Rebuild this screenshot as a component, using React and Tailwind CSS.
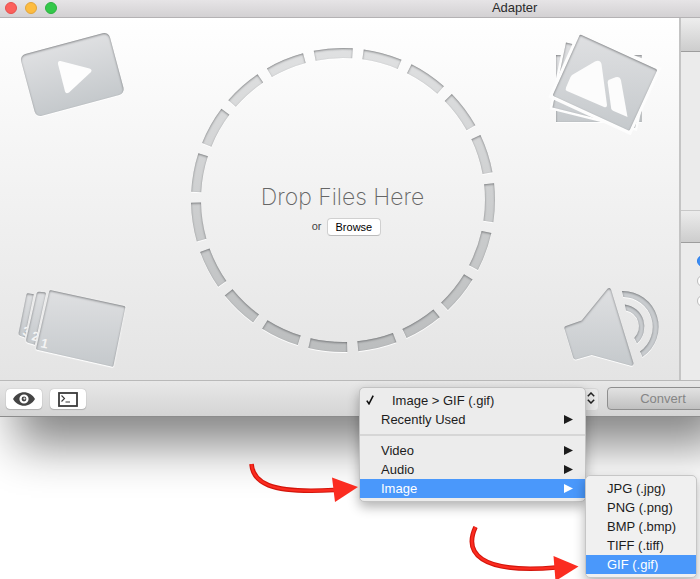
const GIF = 'Image > GIF (.gif)';

const formats = ['JPG (.jpg)', 'PNG (.png)', 'BMP (.bmp)', 'TIFF (.tiff)', 'GIF (.gif)'];

const SEGMENTS = 19;

// One inset block of the drop ring, centred on the given angle (degrees from the top)
const segmentPath = (deg) => {
  const point = (r, a) => {
    const rad = (a * Math.PI) / 180;
    return `${(155 + r * Math.sin(rad)).toFixed(2)} ${(155 - r * Math.cos(rad)).toFixed(2)}`;
  };
  const from = deg - 7.4;
  const to = deg + 7.4;
  return `M${point(152, from)} A152 152 0 0 1 ${point(152, to)} L${point(142, to)} A142 142 0 0 0 ${point(142, from)}Z`;
};

const SharedDefs = () => (
  <svg width="0" height="0" className="absolute" aria-hidden="true">
    <defs>
      <linearGradient id="metal" x1="0" y1="0" x2="0" y2="1">
        <stop offset="0" stopColor="#dfe0e2" />
        <stop offset="1" stopColor="#c5c9cc" />
      </linearGradient>
      <linearGradient id="ring" gradientUnits="userSpaceOnUse" x1="0" y1="0" x2="0" y2="310">
        <stop offset="0" stopColor="#e0e1e2" />
        <stop offset="1" stopColor="#bbbdbe" />
      </linearGradient>
      <filter id="inset" x="-10%" y="-10%" width="120%" height="120%">
        <feOffset in="SourceAlpha" dx="0" dy="1" result="shift" />
        <feGaussianBlur in="shift" stdDeviation="0.8" result="soft" />
        <feComposite in="SourceAlpha" in2="soft" operator="out" result="edge" />
        <feFlood floodColor="#55585c" floodOpacity="0.9" />
        <feComposite in2="edge" operator="in" result="shade" />
        <feOffset in="SourceAlpha" dy="1" result="below" />
        <feFlood floodColor="#ffffff" floodOpacity="0.9" />
        <feComposite in2="below" operator="in" result="light" />
        <feMerge>
          <feMergeNode in="light" />
          <feMergeNode in="SourceGraphic" />
          <feMergeNode in="shade" />
        </feMerge>
      </filter>
    </defs>
  </svg>
);

const VideoIcon = () => (
  <svg width="122" height="98" viewBox="16 26 122 98" aria-hidden="true">
    <g filter="url(#inset)">
      <rect x="26.3" y="42.5" width="92" height="64" rx="6" fill="url(#metal)" transform="rotate(-15 72.3 74.5)" />
    </g>
    <path d="M60.5 61 L89.5 68.5 Q93 70 90.5 72.5 L69 92.5 Q66 94.5 65 91.5 L58 64 Q57.7 60.5 60.5 61Z" fill="#fdfdfd" />
  </svg>
);

const PhotosIcon = () => (
  <svg width="116" height="112" viewBox="547 26 116 112" aria-hidden="true">
    <path d="M556 55 H641.7 V122 H556Z" fill="url(#metal)" filter="url(#inset)" />
    <path d="M566 42.5 L649 62.5 L635 128 L552.5 107.5Z" fill="#fdfdfd" stroke="#fdfdfd" strokeWidth="5" />
    <path d="M566 42.5 L649 62.5 L635 128 L552.5 107.5Z" fill="url(#metal)" filter="url(#inset)" />
    <path d="M580.5 34.5 L657 69.5 L629 130.5 L553 95.5Z" fill="#fdfdfd" stroke="#fdfdfd" strokeWidth="7" />
    <path d="M581.5 35 L656 69 Q657.3 69.8 656.8 71 L630 129.5 Q629.4 130.8 628 130.3 L554 96.3 Q552.7 95.5 553.2 94.2 L579.5 35.6 Q580.2 34.5 581.5 35Z" fill="url(#metal)" filter="url(#inset)" />
    <path d="M572 75 L595 61.5 Q600 59.3 601.5 64 L607 105 Q607 108 604 107 L567 91 Q565 89.8 566 87.5 L570.5 77Z" fill="#fcfcfc" />
    <path d="M608.5 80 L615.5 77.3 Q620 76.3 621 80.5 L627.5 117 L613 110.8 Q611.5 110 611.2 108.5 L607.6 82Z" fill="#fcfcfc" />
  </svg>
);

const SLIDE_2 = 'M39 290.7 L44.5 291.3 Q46.2 291.8 45.8 293.4 L34.9 343.8 L28 341.8 Q25.8 341 26.2 338.5 L36.6 292.5 Q37.3 290.5 39 290.7Z';
const SLIDE_1 = 'M51 289.2 L124 305 Q125.5 305.5 125.2 307 L113.5 364.5 Q113 366 111.5 365.6 L37.2 348.8 Q35.9 348.3 36.2 347 L49.2 290.4 Q49.6 288.9 51 289.2Z';

const SlidesIcon = () => (
  <svg width="122" height="90" viewBox="16 281 122 90" className="font-['Liberation_Sans'] text-[13px] font-bold" aria-hidden="true">
    <path d="M28 292.3 L33.8 293.3 L24.8 336.5 L20 334.8 Q18.2 334 18.6 332 L26.3 294 Q26.8 292 28 292.3Z" fill="url(#metal)" filter="url(#inset)" />
    <text fill="#f4f4f4" transform="translate(22 334) rotate(13)">3</text>
    <path d={SLIDE_2} fill="#ececec" stroke="#ececec" strokeWidth="3" />
    <path d={SLIDE_2} fill="url(#metal)" filter="url(#inset)" />
    <text fill="#f4f4f4" transform="translate(31 339) rotate(13)">2</text>
    <path d={SLIDE_1} fill="#ececec" stroke="#ececec" strokeWidth="3" />
    <path d={SLIDE_1} fill="url(#metal)" filter="url(#inset)" />
    <text fill="#f4f4f4" transform="translate(40 346) rotate(13)">1</text>
  </svg>
);

const SpeakerIcon = () => (
  <svg width="116" height="90" viewBox="547 281 116 90" aria-hidden="true">
    <path d="M607.5 287.8 Q610 285.8 611 288.6 L633.4 361.8 Q634 365.3 631 364.8 L591.7 354 L576 358.4 Q573.9 358.8 573.2 356.8 L564.4 327.8 Q564 325.6 566 325 L581.7 319.5Z" fill="url(#metal)" filter="url(#inset)" />
    <g fill="#c9cccf" filter="url(#inset)">
      <path d="M622 290 A36 36 0 0 1 642.5 356 L640 350.5 A30 30 0 0 0 623.3 296Z" />
      <path d="M624.8 303.5 A22.5 22.5 0 0 1 637 342.5 L634.3 337 A16.5 16.5 0 0 0 626 309.5Z" />
    </g>
  </svg>
);

const DropRing = () => (
  <svg width="310" height="310" viewBox="0 0 310 310" className="col-start-1 row-start-1" aria-hidden="true">
    <g filter="url(#inset)" fill="url(#ring)">
      {Array.from({ length: SEGMENTS }, (_, i) => (
        <path key={i} d={segmentPath(-3.7 + (i * 360) / SEGMENTS)} />
      ))}
    </g>
  </svg>
);

const TitleBar = () => (
  <header className="grid h-[18px] grid-cols-[17fr_auto_7fr] items-center border-b border-[#b4b2b4] bg-gradient-to-b from-[#e6e4e6] to-[#d3d1d3]">
    <div className="flex gap-2 pb-1 pl-[5px]">
      <button type="button" aria-label="Close" className="size-3 rounded-full border border-[#e5504d] bg-[#fc605c]" />
      <button type="button" aria-label="Minimize" className="size-3 rounded-full border border-[#e2a53a] bg-[#fdbc40]" />
      <button type="button" aria-label="Zoom" className="size-3 rounded-full border border-[#2cb140] bg-[#34c84a]" />
    </div>
    <h1 className="pb-1 text-[13px] leading-4 text-[#2b2b2b]">Adapter</h1>
  </header>
);

const DropZone = () => (
  <main className="flex min-w-0 flex-1 items-stretch justify-between bg-gradient-to-b from-white to-[#e4e4e4] px-4 py-2">
    <div className="flex flex-col justify-between">
      <VideoIcon />
      <SlidesIcon />
    </div>
    <section className="grid place-items-center pt-0.5">
      <DropRing />
      <div className="col-start-1 row-start-1 flex flex-col items-center gap-[5px] pt-4">
        <h2 className="font-['Inter'] text-[23px] leading-8 font-extralight text-[#666]">Drop Files Here</h2>
        <div className="flex items-center gap-[5px] pl-2 text-[11px]">
          <span className="text-[#444]">or</span>
          <button type="button" className="h-[18px] rounded-[4px] border border-[#d0d0d0] border-b-[#bbb] bg-white px-2 leading-4 text-black">
            Browse
          </button>
        </div>
      </div>
    </section>
    <div className="flex flex-col justify-between">
      <PhotosIcon />
      <SpeakerIcon />
    </div>
  </main>
);

const SidebarHeader = () => (
  <div className="h-8 border-b border-[#9d9d9d] bg-gradient-to-b from-[#ececec] to-[#cdcdcd]" />
);

const Sidebar = () => (
  <aside className="w-[61px] shrink-0 border-l-2 border-[#c4c4c4] bg-[#ebebeb] pt-[2px]">
    <SidebarHeader />
    <div className="h-[159px] border-b border-[#c8c8c8]" />
    <SidebarHeader />
    <div className="flex flex-col gap-2 pt-3 pl-4">
      <input type="radio" name="quality" aria-label="High quality" defaultChecked className="size-3 appearance-none rounded-full border border-[#bbb] bg-white checked:border-[#2b7de9] checked:bg-[#3b8df5]" />
      <input type="radio" name="quality" aria-label="Medium quality" className="size-3 appearance-none rounded-full border border-[#bbb] bg-white" />
      <input type="radio" name="quality" aria-label="Low quality" className="size-3 appearance-none rounded-full border border-[#bbb] bg-white" />
    </div>
  </aside>
);

const MenuItem = ({ label, selected, indent, submenu }) => (
  <button
    type="button"
    role="menuitem"
    className={`flex h-[19px] w-full items-center pr-3 text-left ${indent ? 'pl-8' : 'pl-[21px]'} ${
      selected ? 'bg-[#4a98fb] text-white' : 'text-[#1c1c1c]'
    }`}
  >
    <span className="flex-1">{label}</span>
    {submenu && (
      <svg width="9" height="9" viewBox="0 0 9 9" fill="currentColor" aria-hidden="true">
        <path d="M0 0 L9 4.5 L0 9Z" />
      </svg>
    )}
  </button>
);

const FormatMenu = () => (
  <div role="menu" className="absolute top-0 left-0 z-10 w-[227px] rounded-[5px] border border-[#c2c2c2] bg-[#ececec] py-[3px] text-[13px] leading-[19px] shadow-[0_5px_12px_rgba(0,0,0,0.3)]">
    <div className="relative">
      <svg width="8" height="10" viewBox="0 0 8 10" className="absolute top-1 left-[6px]" fill="none" stroke="#111" strokeWidth="1.6" aria-hidden="true">
        <path d="M0.8 5.6 L3 8.8 L7.2 0.6" />
      </svg>
      <MenuItem label={GIF} indent />
    </div>
    <MenuItem label="Recently Used" submenu />
    <hr className="my-[5px] border-t-2 border-[#d6d6d6]" />
    <MenuItem label="Video" submenu />
    <MenuItem label="Audio" submenu />
    <div className="relative">
      <MenuItem label="Image" selected submenu />
      <div role="menu" className="absolute -top-1 left-full w-28 rounded-[5px] border border-[#c6c6c6] bg-[#f0f0f0] py-[3px] shadow-[0_5px_12px_rgba(0,0,0,0.3)]">
        {formats.map((format) => (
          <MenuItem key={format} label={format} selected={format === 'GIF (.gif)'} />
        ))}
      </div>
    </div>
  </div>
);

const ToolButton = ({ label, children }) => (
  <button type="button" aria-label={label} className="grid h-5 w-9 place-items-center rounded-[4px] bg-white shadow-[0_0_1px_rgba(0,0,0,0.35),0_1px_1px_rgba(0,0,0,0.15)]">
    {children}
  </button>
);

const Toolbar = () => (
  <footer className="flex h-[37px] items-start gap-2 border-t border-b border-t-[#b9b9b9] border-b-[#8c8c8c] bg-gradient-to-b from-[#e8e8e8] to-[#d4d4d4] pt-[6px] pl-[6px]">
    <div className="flex shrink-0 gap-2 pt-0.5">
      <ToolButton label="Preview">
        <svg width="22" height="14" viewBox="0 0 22 14" aria-hidden="true">
          <path d="M0 7 C5 -2 17 -2 22 7 C17 16 5 16 0 7Z" fill="#444" />
          <circle cx="11" cy="7" r="3.5" fill="#444" stroke="#fff" strokeWidth="2.2" />
          <circle cx="11.4" cy="6.6" r="1.1" fill="#ddd" />
        </svg>
      </ToolButton>
      <ToolButton label="Terminal">
        <svg width="20" height="15" viewBox="0 0 20 15" fill="none" stroke="#3a3a3a" aria-hidden="true">
          <rect x="1" y="1" width="18" height="13" strokeWidth="1.8" />
          <path d="M3.5 3.5 L6.5 6.5 L3.5 9.5 M7.5 10 H12" strokeWidth="1.1" />
        </svg>
      </ToolButton>
    </div>
    <div className="relative ml-auto w-[240px] shrink-0">
      <select aria-label="Output format" defaultValue={GIF} className="h-[23px] w-full appearance-none rounded-[4px] border border-[#d6d6d6] bg-[#e9e9e9] pl-2 text-[13px]">
        <option>{GIF}</option>
      </select>
      <svg width="8" height="12" viewBox="0 0 8 12" className="absolute top-[5px] right-1" fill="none" stroke="#222" strokeWidth="1.5" aria-hidden="true">
        <path d="M0.8 4.2 L4 1 L7.2 4.2 M0.8 7.8 L4 11 L7.2 7.8" />
      </svg>
      <FormatMenu />
    </div>
    <button type="button" className="mr-[21px] h-[23px] w-28 shrink-0 rounded-[4px] border border-[#8f8f8f] bg-gradient-to-b from-[#e2e2e2] to-[#c0c0c0] text-[13px] leading-5 text-[#858585]">
      Convert
    </button>
  </footer>
);

const Arrows = () => (
  <>
    <svg width="112" height="46" viewBox="248 460 112 46" className="absolute top-[460px] left-[248px] z-20" aria-hidden="true">
      <path d="M251.5 464 C253 482 268 494 334 490" fill="none" stroke="#d3150b" strokeWidth="4.6" />
      <path d="M251.5 464 C253 482 268 494 334 490" fill="none" stroke="#fb2c20" strokeWidth="2.4" />
      <path d="M332 477.5 L358 487 L335 502Z" fill="#fb2c20" />
    </svg>
    <svg width="116" height="60" viewBox="466 523 116 60" className="absolute top-[523px] left-[466px] z-20" aria-hidden="true">
      <path d="M475.5 527 C464 552 478 574 556 567.5" fill="none" stroke="#d3150b" strokeWidth="4.6" />
      <path d="M475.5 527 C464 552 478 574 556 567.5" fill="none" stroke="#fb2c20" strokeWidth="2.4" />
      <path d="M553.5 556 L578.5 566.5 L555.5 581Z" fill="#fb2c20" />
    </svg>
  </>
);

export default function App() {
  return (
    <div className="relative min-h-screen overflow-hidden bg-white font-['Liberation_Sans',sans-serif] text-black">
      <SharedDefs />
      {/* The window runs past the right edge of the screen */}
      <div className="-mr-10 shadow-[0_44px_44px_-16px_rgba(0,0,0,0.48)]">
        <TitleBar />
        <div className="flex h-[362px]">
          <DropZone />
          <Sidebar />
        </div>
        <Toolbar />
      </div>
      <Arrows />
    </div>
  );
}
